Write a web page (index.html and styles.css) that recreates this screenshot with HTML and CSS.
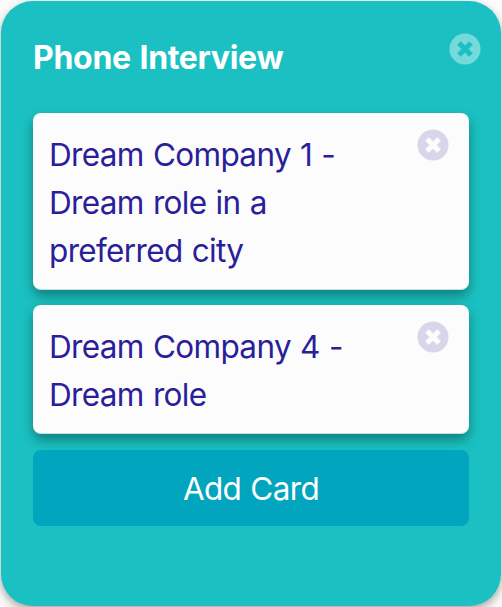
FILE: index.html
```html
<!DOCTYPE html>
<html lang="en">
<head>
<meta charset="utf-8">
<title>Phone Interview</title>
<link rel="stylesheet" href="styles.css">
</head>
<body>
<section class="list">
  <header class="list-header">
    <h2 class="list-title">Phone Interview</h2>
    <button class="close close-list" aria-label="Delete list">
      <svg viewBox="0 0 32 32"><circle cx="16" cy="16" r="15.5"/><path d="M10 10 22 22M22 10 10 22"/></svg>
    </button>
  </header>
  <article class="card">
    <p class="card-text">Dream Company 1 - Dream role in a preferred city</p>
    <button class="close" aria-label="Delete card">
      <svg viewBox="0 0 32 32"><circle cx="16" cy="16" r="15.5"/><path d="M10 10 22 22M22 10 10 22"/></svg>
    </button>
  </article>
  <article class="card">
    <p class="card-text">Dream Company 4 - Dream role</p>
    <button class="close" aria-label="Delete card">
      <svg viewBox="0 0 32 32"><circle cx="16" cy="16" r="15.5"/><path d="M10 10 22 22M22 10 10 22"/></svg>
    </button>
  </article>
  <button class="add">Add Card</button>
</section>
</body>
</html>
```
FILE: styles.css
```css
* { box-sizing: border-box; }
body { margin: 0; background: #fcfcfc; font-family: Inter, sans-serif; font-size: 31.5px; line-height: 48px; letter-spacing: -0.65px; word-spacing: 0.9px; overflow: hidden; }
.list { width: 500px; height: 605px; margin: 1px; padding: 32px; border-radius: 32px; background: #1bc1c2; box-shadow: 0 4px 10px rgba(0,0,0,.35); }
.list-header { display: flex; justify-content: space-between; height: 80px; }
.list-title { margin: 0; padding-top: 1px; color: #fff; font-size: 32px; font-weight: 700; letter-spacing: -0.3px; word-spacing: 1.4px; white-space: nowrap; }
.close { flex: none; width: 32px; height: 32px; padding: 0; border: 0; background: none; }
.close svg { display: block; width: 32px; height: 32px; fill: #d8d6e9; }
.close path { fill: none; stroke: #fcfcfc; stroke-width: 5.3; }
.close-list { margin-right: -12px; }
.close-list svg { fill: #76dada; }
.close-list path { stroke: #1bc1c2; }
.card { display: flex; justify-content: space-between; width: 436px; margin-bottom: 15px; padding: 16px 20px 16px 16px; border-bottom: 1px solid #bce6e6; border-radius: 8px; background: #fcfcfc; box-shadow: 0 6px 12px rgba(0,0,0,.35); }
.card-text { width: 320px; margin: 2px 0 -2px; color: #2b1f99; }
.add { position: relative; display: block; width: 436px; height: 76px; margin-top: 16px; padding: 2px 0 0; border: 0; border-radius: 8px; background: #02a5be; color: #fff; font: inherit; letter-spacing: inherit; word-spacing: inherit; }
```
